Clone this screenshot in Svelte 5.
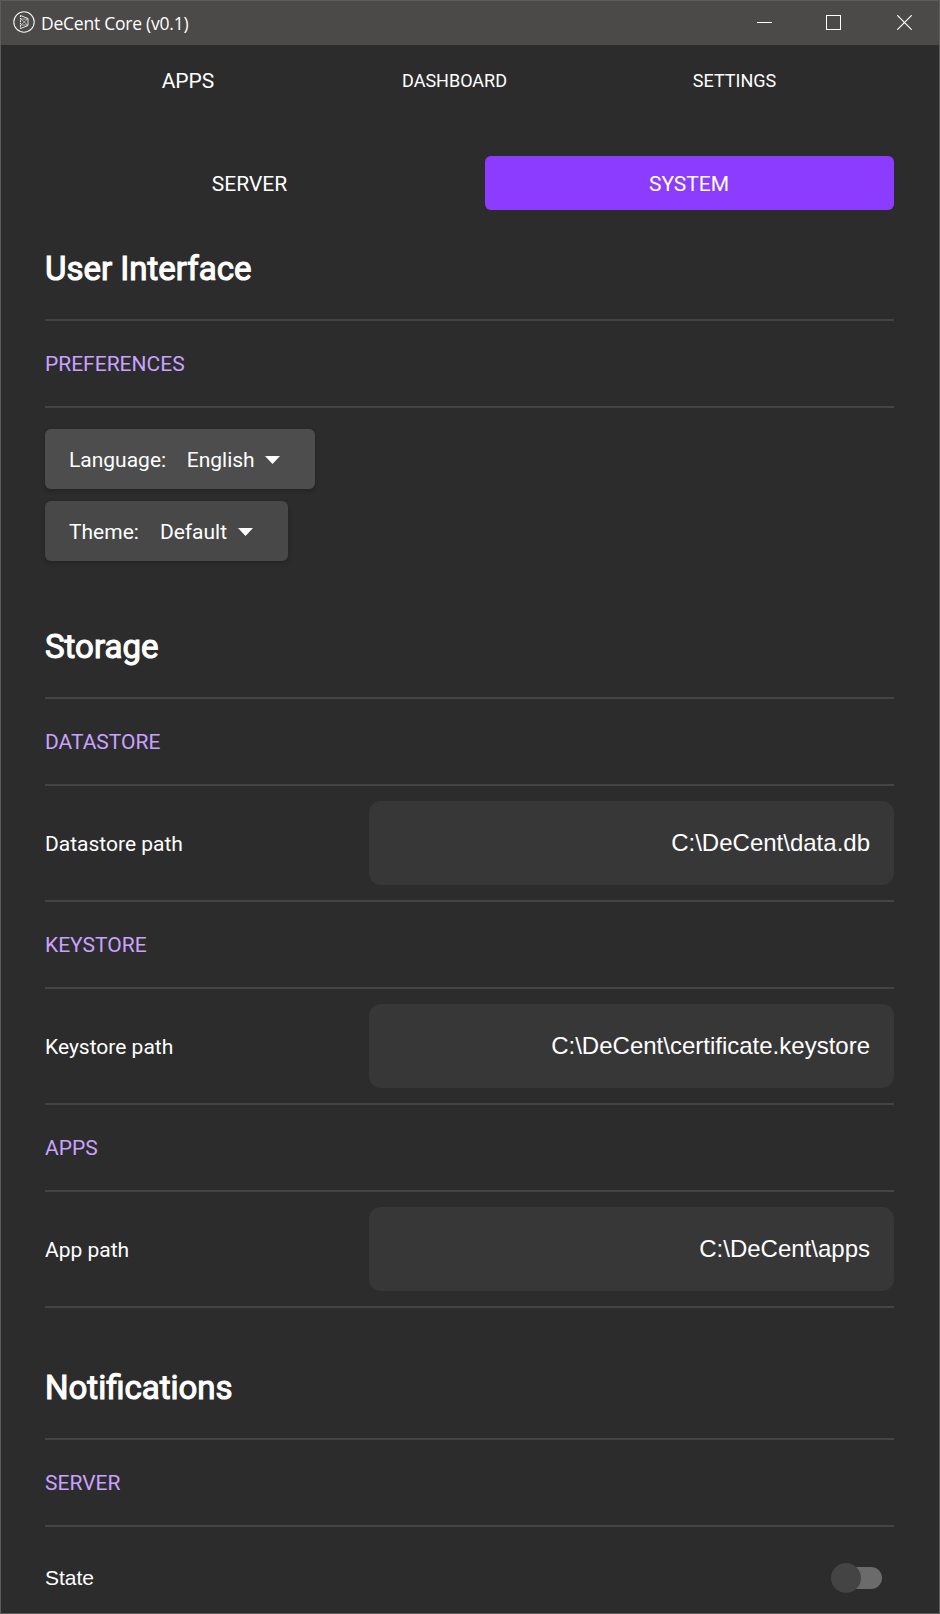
<script>
  const tabs = ['APPS', 'DASHBOARD', 'SETTINGS'];
  const selects = [
    { label: 'Language:', value: 'English' },
    { label: 'Theme:', value: 'Default' }
  ];
  const storage = [
    { title: 'DATASTORE', label: 'Datastore path', value: 'C:\\DeCent\\data.db' },
    { title: 'KEYSTORE', label: 'Keystore path', value: 'C:\\DeCent\\certificate.keystore' },
    { title: 'APPS', label: 'App path', value: 'C:\\DeCent\\apps' }
  ];
</script>

<div class="window">
  <header class="titlebar">
    <svg class="logo" width="22" height="22" viewBox="0 0 22 22" fill="none" stroke="#f4f4f4">
      <circle cx="11" cy="11" r="10.2" stroke-width="1.1" />
      <path d="M7.5 4.5L15 7.5V14.5L7.5 17.5" stroke-width=".9" />
      <path d="M7.5 4.5V17.5" stroke-width="1.1" stroke-dasharray="1.6 .8" />
      <path d="M8 8L15 14.5M15 7.5L8 14M8.5 8H14.5M8.5 14H14.5" stroke-width=".6" />
    </svg>
    <span class="name">DeCent Core (v0.1)</span>
    <div class="controls">
      <svg width="15" height="15" viewBox="0 0 15 15"><path d="M0 7.5H15" stroke="#fff" /></svg>
      <svg width="15" height="15" viewBox="0 0 15 15"><rect x=".5" y=".5" width="14" height="14" fill="none" stroke="#fff" /></svg>
      <svg width="15" height="15" viewBox="0 0 15 15"><path d="M.3 .3L14.7 14.7M14.7 .3L.3 14.7" stroke="#fff" stroke-width="1.2" /></svg>
    </div>
  </header>

  <nav>
    {#each tabs as tab, i}
      <span class="t{i}">{tab}</span>
    {/each}
  </nav>

  <main>
    <div class="subtabs">
      <button>SERVER</button>
      <button class="active">SYSTEM</button>
    </div>

    <h1>User Interface</h1>
    <h2 class="first">PREFERENCES</h2>
    <div class="selects">
      {#each selects as s, i}
        <div class="select" class:hover={i === 0}>
          <span class="key">{s.label}</span>
          <span>{s.value}</span>
          <svg width="15" height="8" viewBox="0 0 15 8"><path d="M0 0H15L7.5 8Z" fill="#fff" /></svg>
        </div>
      {/each}
    </div>

    <h1>Storage</h1>
    {#each storage as item, i}
      <h2 class:first={i === 0}>{item.title}</h2>
      <div class="row">
        <span class="label">{item.label}</span>
        <div class="field">{item.value}</div>
      </div>
    {/each}

    <h1 class="notes">Notifications</h1>
    <h2 class="first">SERVER</h2>
    <div class="row state">
      <span>State</span>
      <div class="switch"><i></i></div>
    </div>
  </main>
</div>

<style>
  .window {
    box-sizing: border-box;
    width: 940px;
    height: 1614px;
    overflow: hidden;
    border: 1px solid #5c5c5a;
    background: #2c2c2c;
    color: #fff;
    font: 21px/30px Roboto, sans-serif;
    display: flex;
    flex-direction: column;
  }
  .titlebar {
    height: 44px;
    flex: none;
    display: flex;
    align-items: center;
    background: #4c4a48;
    padding-left: 12px;
  }
  .logo { margin-top: -2px; }
  .name {
    font: 17.5px/24px "Open Sans", sans-serif;
    letter-spacing: -0.24px;
    margin-left: 6px;
  }
  .controls {
    display: grid;
    grid-template-columns: 69px 71px 15px;
    margin: -1px 27px 0 auto;
    height: 15px;
  }
  .controls svg { display: block; }
  nav {
    height: 111px;
    flex: none;
    display: flex;
    box-sizing: border-box;
    padding-top: 21px;
    text-align: center;
  }
  nav span { font-size: 18px; }
  nav .t0 { width: 374px; margin-right: 1px; font-size: 21px; }
  nav .t1 { width: 157px; }
  nav .t2 { width: 403px; }
  main { padding: 0 45px 0 44px; }
  .subtabs {
    display: grid;
    grid-template-columns: 1fr 1fr;
    gap: 31px;
    height: 54px;
  }
  button {
    border: 0;
    border-radius: 6px;
    background: none;
    color: inherit;
    font: inherit;
    padding: 2px 0 0;
  }
  .active {
    background: #8c3cff;
    padding-right: 1px;
  }
  h1 {
    margin: 0;
    height: 109px;
    box-sizing: border-box;
    padding-top: 39px;
    font-size: 33px;
    line-height: 40px;
    font-weight: 400;
    -webkit-text-stroke: 1.1px #fff;
  }
  h2 {
    margin: 0;
    height: 85px;
    border-bottom: 2px solid #444;
    font-size: 21px;
    line-height: 86px;
    font-weight: 400;
    color: #c9a2ff;
  }
  .first { border-top: 2px solid #444; }
  .selects {
    display: flex;
    flex-direction: column;
    align-items: flex-start;
    gap: 12px;
    padding: 21px 0 27px;
  }
  .select {
    display: flex;
    align-items: center;
    box-sizing: border-box;
    height: 60px;
    padding: 2px 35px 0 24px;
    border-radius: 6px;
    background: #484848;
    box-shadow: 0 2px 5px rgba(0, 0, 0, 0.2);
  }
  .hover {
    background: #4d4d4d;
    padding-right: 34.6px;
  }
  .key { margin-right: 21px; }
  .hover .key { margin-right: 20.6px; }
  .select svg { margin-left: 11.2px; }
  .hover svg { margin-left: 10.8px; }
  .row {
    display: flex;
    align-items: center;
    justify-content: space-between;
    height: 114px;
    border-bottom: 2px solid #444;
  }
  .label { padding-top: 2px; }
  .field {
    box-sizing: border-box;
    width: 525px;
    height: 84px;
    border-radius: 12px;
    background: #373737;
    padding-right: 24px;
    font: 24px/84px "Liberation Sans", Arial, sans-serif;
    text-align: right;
  }
  .notes { height: 130px; padding-top: 60px; }
  .state {
    height: 102px;
    font-family: "Liberation Sans", Arial, sans-serif;
  }
  .switch {
    display: flex;
    align-items: center;
    width: 47px;
    height: 22px;
    margin-right: 12px;
    border-radius: 11px;
    background: #6b6b6b;
  }
  .switch i {
    flex: none;
    width: 30px;
    height: 30px;
    margin-left: -4px;
    border-radius: 50%;
    background: #444;
  }
</style>
